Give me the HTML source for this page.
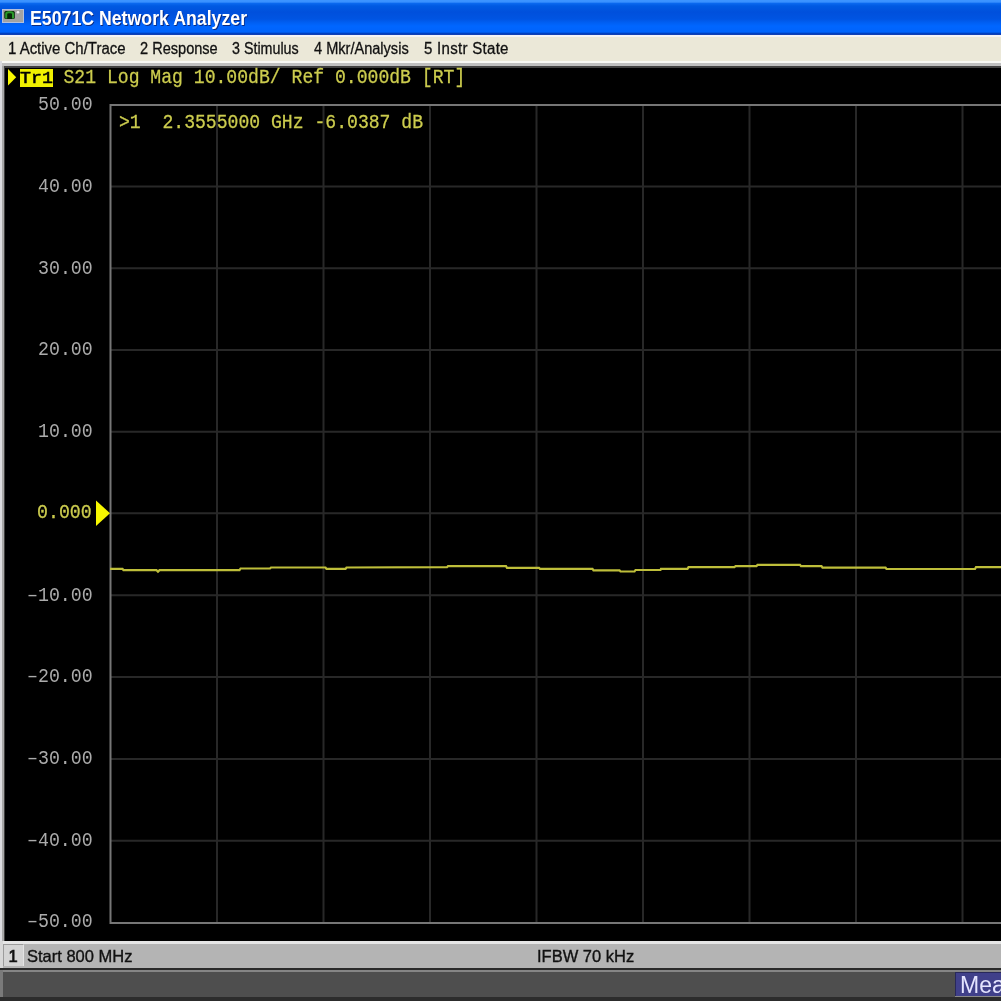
<!DOCTYPE html>
<html><head><meta charset="utf-8">
<style>
html,body{margin:0;padding:0;width:1001px;height:1001px;overflow:hidden;background:#000;}
body{position:relative;font-family:"Liberation Sans",sans-serif;}
#wrap{position:absolute;left:0;top:0;width:1001px;height:1001px;overflow:hidden;filter:blur(0.45px);}
.abs{position:absolute;}
#title{left:0;top:0;width:1001px;height:35px;
 background:linear-gradient(to bottom,#3d95ff 0px,#3890ff 2px,#0a68ee 3.5px,#005ae2 6px,#0050dc 12px,#0054e2 19px,#0060f4 23px,#0066ff 26px,#0064fc 32px,#0040c0 33.5px,#1a40b0 35px);}
#title .t{left:30px;top:5.5px;color:#fff;font-weight:bold;font-size:20.5px;white-space:nowrap;text-shadow:1px 1px 0 #0a2a80;transform-origin:0 0;transform:scaleX(0.8645);}
#menu{left:0;top:35px;width:1001px;height:27px;background:#ebe8d8;}
#menu span{position:absolute;top:3px;font-size:16px;color:#111;-webkit-text-stroke:0.3px #111;white-space:nowrap;transform-origin:0 0;transform:scaleX(0.94);}
.mono{font-family:"Liberation Mono",monospace;font-size:18.25px;-webkit-text-stroke:0.25px currentColor;white-space:pre;position:absolute;transform-origin:0 0;transform:scaleY(1.08);}
.yl{color:#ababab;-webkit-text-stroke:0px;}
.yel{color:#cccc4e;}
</style></head><body>
<div id="wrap">
<div id="title" class="abs">
  <svg class="abs" style="left:2px;top:9px" width="22" height="14" viewBox="0 0 22 14">
    <rect x="0.5" y="0.5" width="21" height="13" fill="#a2a2a2" stroke="#b4c0dc" stroke-width="1"/>
    <rect x="2.3" y="2" width="10.5" height="8" rx="1.5" fill="#062806"/>
    <path d="M4.2 9.5 V5 Q4.2 3.2 6.5 3.2 H8.7 Q11 3.2 11 5 V9.5" stroke="#2a9a2a" stroke-width="2" fill="none"/>
    <circle cx="16" cy="3.3" r="1.3" fill="#f0f0f0"/>
  </svg>
  <div class="t abs">E5071C Network Analyzer</div>
</div>
<div class="abs" style="left:0;top:35px;width:1001px;height:2px;background:#f4f4f6"></div>
<div id="menu" class="abs" style="top:37px;height:24px">
  <span style="left:8.2px;transform:scaleX(0.935)">1 Active Ch/Trace</span>
  <span style="left:139.5px;transform:scaleX(0.91)">2 Response</span>
  <span style="left:232px;transform:scaleX(0.893)">3 Stimulus</span>
  <span style="left:314px;transform:scaleX(0.91)">4 Mkr/Analysis</span>
  <span style="left:423.5px;letter-spacing:0.3px">5 Instr State</span>
</div>
<!-- frame -->
<div class="abs" style="left:0;top:61px;width:1001px;height:880px;background:#dcdce0"></div>
<div class="abs" style="left:2px;top:61px;width:999px;height:2px;background:#f8f8f4"></div>
<div class="abs" style="left:2px;top:63px;width:999px;height:878px;background:#a8a8a8"></div>
<div class="abs" style="left:2px;top:63px;width:999px;height:3px;background:#c0c0c0"></div>
<div class="abs" style="left:4px;top:66px;width:997px;height:875px;background:#404040"></div>
<div class="abs" style="left:5px;top:68px;width:996px;height:873px;background:#000"></div>

<svg class="abs" style="left:0;top:0" width="1001" height="1001" viewBox="0 0 1001 1001">
  <g stroke="#282828" stroke-width="2" fill="none">
    <path d="M217 105 V922.9 M323.5 105 V922.9 M430 105 V922.9 M536.5 105 V922.9 M643 105 V922.9 M749.5 105 V922.9 M856 105 V922.9 M962.5 105 V922.9"/>
    <path d="M110 186.4 H1001 M110 268.2 H1001 M110 350 H1001 M110 431.8 H1001 M110 513.2 H1001 M110 595.3 H1001 M110 677.1 H1001 M110 758.9 H1001 M110 840.7 H1001"/>
  </g>
  <g stroke="#767676" stroke-width="2" fill="none">
    <path d="M110.5 104 V923.9 M109.5 105 H1001 M109.5 922.9 H1001"/>
  </g>
  <polygon points="8,69 16.2,77.2 8,85.4" fill="#f8f800"/>
  <rect x="20" y="69" width="33" height="18" fill="#f0f000"/>
  <polygon points="96,500.5 110,513.2 96,526" fill="#f8f800"/>
  <polyline fill="none" stroke="#bebe3a" stroke-width="2.2" points="110,568.8 122.5,568.8 123.5,570.2 156.5,570.2 158,571.7 159.5,570.2 239.5,570.2 240.6,568.5 270,568.5 271,567.5 325.5,567.5 326.5,568.9 345.5,568.9 346.5,567.5 447,567.2 448,566.2 506,566.1 507,567.8 539,567.8 540,568.8 592.5,568.8 593.5,570.3 619.5,570.3 620.5,571.5 634.5,571.5 635.5,570 660.5,570 661,568.9 687.5,568.9 688.5,567.2 734.5,567.2 735.5,566.1 756.5,566.1 757.5,564.8 800,564.8 801,566.1 821.5,566.1 822.5,567.6 885.5,567.6 886.5,569 975,569 976,567.2 1001,567.2"/>
</svg>
<div class="mono" style="left:20px;top:70px;color:#000;-webkit-text-stroke:0.6px #000;transform:scaleY(0.89)">Tr1</div>
<div class="mono yel" style="left:63.5px;top:67.3px;font-size:18.1px">S21 Log Mag 10.00dB/ Ref 0.000dB [RT]</div>
<div class="mono yel" style="left:119px;top:111.8px;font-size:18.1px">&gt;1  2.3555000 GHz -6.0387 dB</div>
<div class="mono yl" style="left:38.0px;top:93.9px">50.00</div>
<div class="mono yl" style="left:38.0px;top:175.9px">40.00</div>
<div class="mono yl" style="left:38.0px;top:257.9px">30.00</div>
<div class="mono yl" style="left:38.0px;top:338.9px">20.00</div>
<div class="mono yl" style="left:38.0px;top:420.9px">10.00</div>
<div class="mono yel" style="left:37.0px;top:502.4px">0.000</div>
<div class="mono yl" style="left:27.0px;top:584.9px">&#8211;10.00</div>
<div class="mono yl" style="left:27.0px;top:665.9px">&#8211;20.00</div>
<div class="mono yl" style="left:27.0px;top:747.9px">&#8211;30.00</div>
<div class="mono yl" style="left:27.0px;top:829.9px">&#8211;40.00</div>
<div class="mono yl" style="left:27.0px;top:910.9px">&#8211;50.00</div>

<!-- status bar -->
<div class="abs" style="left:0;top:941px;width:1001px;height:27px;background:#b4b4b4"></div>
<div class="abs" style="left:0;top:941px;width:1001px;height:3px;background:#e6e6e6"></div>
<div class="abs" style="left:0;top:941px;width:2.5px;height:27px;background:#d8d8d8"></div>
<div class="abs" style="left:2.5px;top:944px;width:21px;height:22px;background:#d4d4d4;border-left:1px solid #9c9c9c;border-top:1.5px solid #9c9c9c;border-right:1px solid #e4e4e4;box-sizing:border-box"></div>
<div class="abs" style="left:8.5px;top:946.5px;font-size:16.5px;color:#111;-webkit-text-stroke:0.7px #111">1</div>
<div class="abs" style="left:27px;top:946.5px;font-size:16.5px;color:#111;-webkit-text-stroke:0.35px #111;white-space:nowrap">Start 800 MHz</div>
<div class="abs" style="left:537px;top:946.5px;font-size:16.5px;color:#111;-webkit-text-stroke:0.35px #111;white-space:nowrap">IFBW 70 kHz</div>
<!-- bottom bar -->
<div class="abs" style="left:0;top:968px;width:1001px;height:33px;background:#4e4e4e"></div>
<div class="abs" style="left:0;top:968px;width:1001px;height:2px;background:#2a2a2a"></div>
<div class="abs" style="left:0;top:970px;width:1001px;height:2px;background:#858585"></div>
<div class="abs" style="left:0;top:970px;width:2.5px;height:27px;background:#7a7a7a"></div>
<div class="abs" style="left:955px;top:972px;width:46px;height:24px;background:#40408a;border-left:1px solid #28285a;border-top:1px solid #28285a;box-sizing:border-box"></div>
<div class="abs" style="left:955px;top:996px;width:46px;height:1px;background:#8a8a8a"></div>
<div class="abs" style="left:960px;top:972px;font-size:23px;color:#e4e4ff;white-space:nowrap">Mea</div>
<div class="abs" style="left:0;top:997px;width:1001px;height:4px;background:#2c2c2c"></div>
</div>
</body></html>
